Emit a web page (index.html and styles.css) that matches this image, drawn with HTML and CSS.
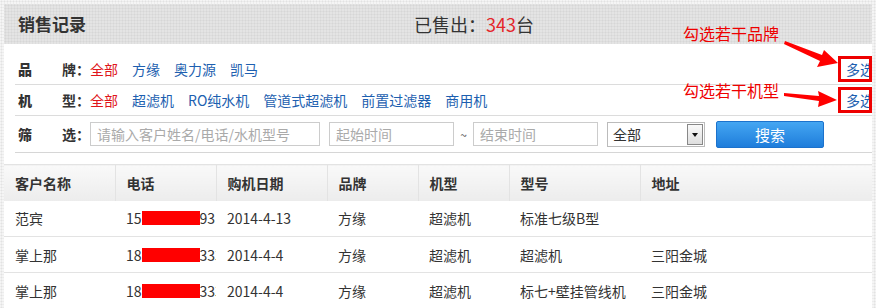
FILE: index.html
```html
<!DOCTYPE html>
<html lang="zh-CN">
<head>
    <meta charset="UTF-8">
    <meta name="viewport" content="width=device-width, initial-scale=1.0">
    <title>销售记录</title>
    <link rel="stylesheet" href="styles.css">
</head>
<body>
    <div class="panel">
        <!-- 标题栏 -->
        <div class="panel-head">
            <h2>销售记录</h2>
            <div class="sold">已售出：<em>343</em>台</div>
        </div>

        <!-- 筛选 -->
        <div class="filters">
            <div class="frow first">
                <span class="flabel"><b>品</b>牌：</span>
                <a class="on">全部</a>
                <a>方缘</a>
                <a>奥力源</a>
                <a>凯马</a>
                <a class="multi">多选</a>
            </div>
            <div class="frow">
                <span class="flabel"><b>机</b>型：</span>
                <a class="on">全部</a>
                <a>超滤机</a>
                <a>RO纯水机</a>
                <a>管道式超滤机</a>
                <a>前置过滤器</a>
                <a>商用机</a>
                <a class="multi">多选</a>
            </div>
            <div class="frow search">
                <span class="flabel"><b>筛</b>选：</span>
                <input class="kw" type="text" placeholder="请输入客户姓名/电话/水机型号">
                <input class="date" type="text" placeholder="起始时间">
                <span class="tilde">~</span>
                <input class="date" type="text" placeholder="结束时间">
                <div class="sel"><span>全部</span><i class="sel-btn"></i></div>
                <button type="button">搜索</button>
            </div>
        </div>

        <!-- 列表 -->
        <table class="list">
            <thead>
                <tr><th>客户名称</th><th>电话</th><th>购机日期</th><th>品牌</th><th>机型</th><th>型号</th><th>地址</th></tr>
            </thead>
            <tbody>
                <tr><td>范宾</td><td>15<span class="mask"></span>93</td><td>2014-4-13</td><td>方缘</td><td>超滤机</td><td>标准七级B型</td><td></td></tr>
                <tr><td>掌上那</td><td>18<span class="mask"></span>333</td><td>2014-4-4</td><td>方缘</td><td>超滤机</td><td>超滤机</td><td>三阳金城</td></tr>
                <tr><td>掌上那</td><td>18<span class="mask"></span>333</td><td>2014-4-4</td><td>方缘</td><td>超滤机</td><td>标七+壁挂管线机</td><td>三阳金城</td></tr>
            </tbody>
        </table>
    </div>

    <!-- 标注 -->
    <div class="note note-brand">勾选若干品牌</div>
    <div class="note note-type">勾选若干机型</div>
    <svg class="arrows" width="876" height="308" viewBox="0 0 876 308">
        <polygon points="785,41 822,55 824,50 838,63 817,67 820,61 784,44" fill="#f00"/>
        <polygon points="784,93 819,96 818,91 837,100 818,107 819,101 784,96" fill="#f00"/>
    </svg>
</body>
</html>
```

FILE: styles.css
```css
* { box-sizing: border-box; }
html, body { margin: 0; height: 308px; overflow: hidden; }
body {
    position: relative;
    font-family: "Noto Sans CJK SC", "Liberation Sans", sans-serif;
    font-size: 14px;
    color: #333;
    background: #f5f5f5 radial-gradient(circle, #e2e2e2 0.9px, transparent 1.1px) 0 0 / 3px 3px;
    padding: 4px 4px 0 4px;
}

.panel { background: #fff; width: 868px; height: 304px; overflow: hidden; }

.panel-head {
    display: flex; align-items: center; height: 40px; padding-left: 14px;
    background: #e4e4e4 radial-gradient(circle, #d6d6d6 0.9px, transparent 1.1px) 0 0 / 3px 3px;
}
.panel-head h2 { margin: 0; width: 396px; font-size: 17px; font-weight: bold; color: #333; line-height: 40px; }
.sold { font-size: 18px; color: #333; line-height: 40px; }
.sold em { font-style: normal; color: #e4262b; }

.filters { margin-left: 11px; }
.frow { display: flex; align-items: center; height: 31px; border-bottom: 1px solid #dcdcdc; white-space: nowrap; }
.frow.first { height: 41px; padding-top: 10px; }
.frow.search { height: 37px; border-bottom-color: #d6d6d6; }
.flabel { width: 75px; padding-left: 3px; font-weight: bold; color: #333; }
.flabel b { display: inline-block; width: 44px; }
.frow a { margin-right: 14px; color: #1d5fb0; cursor: pointer; }
.frow a.on { color: #e0161c; }
.frow a.multi {
    margin: 0 0 0 auto; width: 34px; height: 26px; padding-left: 5px;
    border: 3px solid #e00; overflow: hidden; line-height: 20px;
}

.frow input {
    height: 24px; border: 1px solid #ccc; padding: 0 6px;
    font: 14px "Noto Sans CJK SC", sans-serif; color: #333;
}
.frow input::placeholder { color: #aaa; }
.kw { width: 230px; margin-right: 9px; }
.date { width: 125px; }
.tilde { width: 19px; text-align: center; color: #555; font-size: 12px; }
.sel {
    display: flex; align-items: center; justify-content: space-between;
    width: 98px; height: 25px; margin-left: 9px; padding: 0 1px 0 5px;
    border: 1px solid #bbb; background: #fff;
}
.sel-btn {
    position: relative; width: 16px; height: 21px;
    border: 1px solid #888; background: linear-gradient(#fafafa, #dedede);
}
.sel-btn::after {
    content: ""; position: absolute; left: 4px; top: 8px;
    border: 3.5px solid transparent; border-top: 4px solid #111; border-bottom: 0;
}
.frow button {
    width: 108px; height: 27px; margin-left: 11px;
    border: 1px solid #1c72cc; border-radius: 2px;
    background: linear-gradient(#44a6f2, #1f7ddb);
    color: #fff; font: 15px "Noto Sans CJK SC", sans-serif; cursor: pointer;
}

.list { width: 868px; margin-top: 11px; border-collapse: collapse; table-layout: fixed; }
.list th, .list td { height: 36px; padding: 0 0 0 11px; text-align: left; white-space: nowrap; overflow: hidden; }
.list th {
    font-weight: bold; color: #333;
    background: linear-gradient(#f9f9f9, #ececec);
    border-top: 1px solid #e3e3e3; border-left: 1px solid #e3e3e3;
}
.list th:first-child { border-left: 0; }
.list th:nth-child(1) { width: 111px; }
.list th:nth-child(2) { width: 101px; }
.list th:nth-child(3) { width: 111px; }
.list th:nth-child(4) { width: 91px; }
.list th:nth-child(5) { width: 91px; }
.list th:nth-child(6) { width: 131px; }
.list td { border-bottom: 1px solid #e3e3e3; color: #333; }
.mask { display: inline-block; width: 58px; height: 14px; background: #f00; vertical-align: -1px; }

.note { position: absolute; left: 683px; font-size: 16px; color: #e00; line-height: 20px; }
.note-brand { top: 23px; }
.note-type { top: 80px; }
.arrows { position: absolute; left: 0; top: 0; pointer-events: none; }
```
